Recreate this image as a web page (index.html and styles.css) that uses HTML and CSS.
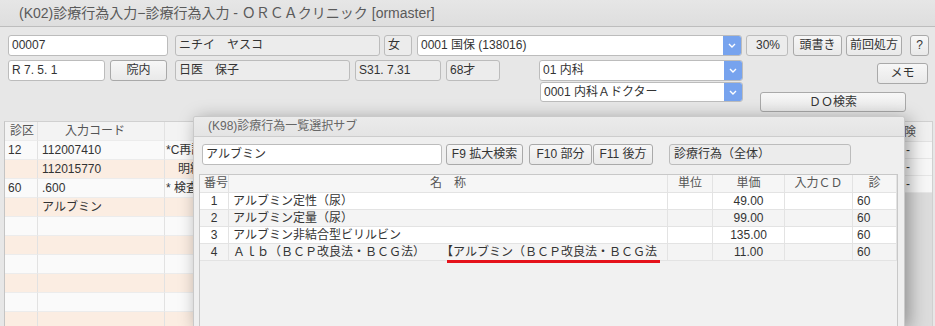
FILE: index.html
```html
<!DOCTYPE html>
<html lang="ja">
<head>
<meta charset="utf-8">
<title>ORCA</title>
<link rel="stylesheet" href="styles.css">
</head>
<body>
<div class="win">
  <div class="titlebar">(K02)診療行為入力−診療行為入力 - ＯＲＣＡクリニック [ormaster]</div>
  <div class="form">
    <div class="row1">
      <div class="fld w-id">00007</div>
      <div class="fld ro w-kana">ニチイ　ヤスコ</div>
      <div class="fld ro w-sex">女</div>
      <div class="combo w-ins"><span class="ctext">0001 国保 (138016)</span><span class="cbtn"><svg width="8" height="5" viewBox="0 0 8 5"><path d="M1 1l3 3 3-3" stroke="#fff" stroke-width="1.4" fill="none"/></svg></span></div>
      <div class="fld ro w-pct">30%</div>
      <div class="btn w-atama">頭書き</div>
      <div class="btn w-zenkai">前回処方</div>
      <div class="btn w-q">?</div>
    </div>
    <div class="row2">
      <div class="fld w-date">R 7. 5. 1</div>
      <div class="btn w-innai">院内</div>
      <div class="fld ro w-name">日医　保子</div>
      <div class="fld ro w-birth">S31. 7.31</div>
      <div class="fld ro w-age">68才</div>
      <div class="combos">
        <div class="combo w-ka"><span class="ctext">01 内科</span><span class="cbtn"><svg width="8" height="5" viewBox="0 0 8 5"><path d="M1 1l3 3 3-3" stroke="#fff" stroke-width="1.4" fill="none"/></svg></span></div>
        <div class="combo w-dr"><span class="ctext">0001 内科Ａドクター</span><span class="cbtn"><svg width="8" height="5" viewBox="0 0 8 5"><path d="M1 1l3 3 3-3" stroke="#fff" stroke-width="1.4" fill="none"/></svg></span></div>
      </div>
      <div class="rightcol">
        <div class="btn w-memo">メモ</div>
        <div class="btn w-do">ＤＯ検索</div>
      </div>
    </div>
  </div>
  <div class="tables">
    <div class="btable">
      <div class="bh c1">診区</div><div class="bh c2">入力コード</div><div class="bh c3"></div>
      <div class="bc c1">12</div><div class="bc c2">112007410</div><div class="bc c3">*C再診</div>
      <div class="bc c1 pe"></div><div class="bc c2 pe">112015770</div><div class="bc c3 pe">　明細書</div>
      <div class="bc c1">60</div><div class="bc c2">.600</div><div class="bc c3">* 検査</div>
      <div class="bc c1 pe"></div><div class="bc c2 pe">アルブミン</div><div class="bc c3 pe"></div>
      <div class="bc c1"></div><div class="bc c2"></div><div class="bc c3"></div>
      <div class="bc c1 pe"></div><div class="bc c2 pe"></div><div class="bc c3 pe"></div>
      <div class="bc c1"></div><div class="bc c2"></div><div class="bc c3"></div>
      <div class="bc c1 pe"></div><div class="bc c2 pe"></div><div class="bc c3 pe"></div>
      <div class="bc c1"></div><div class="bc c2"></div><div class="bc c3"></div>
      <div class="bc c1 pe"></div><div class="bc c2 pe"></div><div class="bc c3 pe"></div>
    </div>
    <div class="rtable">
      <div class="rh">保険</div>
      <div class="rc">-</div>
      <div class="rc">-</div>
      <div class="rc">-</div>
    </div>
  </div>
</div>

<div class="dlg">
  <div class="dtitle">(K98)診療行為一覧選択サブ</div>
  <div class="dbody">
    <div class="srow">
      <div class="fld w-q1">アルブミン</div>
      <div class="btn w-f9">F9 拡大検索</div>
      <div class="btn w-f10">F10 部分</div>
      <div class="btn w-f11">F11 後方</div>
      <div class="fld ro w-kind">診療行為（全体）</div>
    </div>
    <div class="list">
      <div class="lh">番号</div><div class="lh ctr">名　称</div><div class="lh ctr">単位</div><div class="lh ctr">単価</div><div class="lh ctr">入力ＣＤ</div><div class="lh ctr">診</div>

      <div class="lc ctr">1</div><div class="lc">アルブミン定性（尿）</div><div class="lc"></div><div class="lc ctr">49.00</div><div class="lc"></div><div class="lc">60</div>
      <div class="lc ctr alt">2</div><div class="lc alt">アルブミン定量（尿）</div><div class="lc alt"></div><div class="lc ctr alt">99.00</div><div class="lc alt"></div><div class="lc alt">60</div>
      <div class="lc ctr">3</div><div class="lc">アルブミン非結合型ビリルビン</div><div class="lc"></div><div class="lc ctr">135.00</div><div class="lc"></div><div class="lc">60</div>
      <div class="lc ctr alt">4</div><div class="lc alt vis">Ａｌｂ（ＢＣＰ改良法・ＢＣＧ法）　　<span class="mark">【アルブミン（ＢＣＰ改良法・ＢＣＧ法</span></div><div class="lc alt"></div><div class="lc ctr alt">11.00</div><div class="lc alt"></div><div class="lc alt">60</div>
    </div>
  </div>
</div>
</body>
</html>
```

FILE: styles.css
```css
* { box-sizing: border-box; }

html, body {
  margin: 0;
  padding: 0;
}

body {
  width: 935px;
  height: 326px;
  overflow: hidden;
  position: relative;
  background: #e7e7e7;
  font-family: "Liberation Sans", "Noto Sans CJK JP", sans-serif;
  font-size: 12px;
  color: #333;
}

.win {
  width: 935px;
  height: 326px;
  overflow: hidden;
}

.titlebar {
  height: 27px;
  line-height: 26px;
  padding-left: 19px;
  font-size: 14px;
  color: #5a5a5a;
  background: linear-gradient(#e6e6e6, #dedede);
  border-bottom: 1px solid #bdbdbd;
}

.form {
  padding: 8px 0 0 8px;
}

.row1, .row2, .srow {
  display: flex;
  align-items: flex-start;
}

.row2 {
  margin-top: 4px;
  height: 52px;
}

.fld {
  height: 21px;
  line-height: 19px;
  padding: 0 3px;
  border: 1px solid #bcbcbc;
  border-radius: 3px;
  background: #fff;
  white-space: nowrap;
  overflow: hidden;
}

.fld.ro {
  background: #ececec;
}

.btn {
  height: 21px;
  line-height: 19px;
  text-align: center;
  border: 1px solid #a9a9a9;
  border-radius: 3px;
  background: linear-gradient(#f7f7f7, #e9e9e9);
  color: #333;
  white-space: nowrap;
}

.combo {
  display: flex;
  height: 21px;
  border: 1px solid #bcbcbc;
  border-radius: 3px;
  background: #fff;
  overflow: hidden;
}

.ctext {
  flex: 1;
  line-height: 19px;
  padding-left: 3px;
  white-space: nowrap;
}

.cbtn {
  width: 18px;
  display: flex;
  align-items: center;
  justify-content: center;
  background: #77a3ee;
}

/* row 1 widths */
.w-id { width: 160px; }
.w-kana { width: 205px; margin-left: 7px; }
.w-sex { width: 28px; margin-left: 4px; }
.w-ins { width: 325px; margin-left: 5px; }
.w-pct { width: 42px; margin-left: 4px; padding-left: 9px; }
.w-atama { width: 49px; margin-left: 5px; }
.w-zenkai { width: 56px; margin-left: 4px; }
.w-q { width: 19px; margin-left: 8px; }

/* row 2 widths */
.w-date { width: 97px; }
.w-innai { width: 57px; margin-left: 5px; }
.w-name { width: 175px; margin-left: 8px; }
.w-birth { width: 86px; margin-left: 5px; }
.w-age { width: 54px; margin-left: 5px; }

.combos {
  margin-left: 39px;
  width: 204px;
  display: flex;
  flex-direction: column;
  gap: 1px;
}

.w-dr {
  height: 20px;
  margin-left: 1px;
}

.w-dr .ctext { line-height: 18px; }

.rightcol {
  margin-left: 17px;
  width: 168px;
  display: flex;
  flex-direction: column;
}

.w-memo {
  width: 51px;
  margin-top: 3px;
  align-self: flex-end;
}

.w-do {
  width: 146px;
  height: 20px;
  line-height: 18px;
  margin-top: 8px;
}

/* background tables */
.tables {
  margin-top: 9px;
  display: flex;
  padding-left: 4px;
  width: 933px;
}

.btable {
  width: 876px;
  display: grid;
  grid-template-columns: 33px 127px 1fr;
  grid-auto-rows: 19px;
  border-left: 1px solid #c4c4c4;
  border-top: 1px solid #d0d0d0;
}

.bh, .bc {
  line-height: 18px;
  border-right: 1px solid #e2e2e2;
  border-bottom: 1px solid #ececec;
  white-space: nowrap;
  overflow: hidden;
}

.bh {
  background: #f3f3f3;
  color: #555;
}

.bc {
  background: #fafafa;
}

.bc.pe {
  background: #fbede2;
}

.c1 { padding-left: 3px; }
.bh.c1 { padding-left: 5px; }
.c2 { padding-left: 4px; }
.bh.c2 { text-align: center; padding: 0 12px 0 0; }
.c3 { padding-left: 1px; }

.rtable {
  width: 53px;
  height: 205px;
  background: #dcdcdc;
  border-top: 1px solid #d0d0d0;
  border-right: 1px solid #d0d0d0;
}

.rh {
  height: 20px;
  line-height: 20px;
  background: #f0f0f0;
  color: #555;
  text-align: right;
  padding-right: 16px;
  border-bottom: 1px solid #e2e2e2;
}

.rc {
  height: 17px;
  line-height: 16px;
  background: #f7f7f7;
  padding-left: 26px;
  border-bottom: 1px solid #e6e6e6;
}

/* dialog */
.dlg {
  position: absolute;
  left: 193px;
  top: 116px;
  width: 712px;
  height: 210px;
  background: #efefef;
  border: 1px solid #c9c9c9;
  border-bottom: none;
  border-radius: 3px 3px 0 0;
  box-shadow: 4px 3px 18px rgba(0, 0, 0, 0.36);
  overflow: hidden;
}

.dtitle {
  height: 20px;
  line-height: 19px;
  padding-left: 14px;
  color: #666;
  background: linear-gradient(#ebebeb, #e4e4e4);
  border-bottom: 1px solid #cdcdcd;
}

.dbody {
  padding: 7px 0 0 5px;
}

.w-q1 { width: 240px; margin-left: 3px; }
.w-f9 { width: 77px; margin-left: 4px; }
.w-f10 { width: 63px; margin-left: 6px; }
.w-f11 { width: 60px; margin-left: 1px; }
.w-kind { width: 182px; margin-left: 16px; padding-left: 4px; }

.list {
  margin-top: 9px;
  width: 699px;
  height: 160px;
  display: grid;
  grid-template-columns: 29px 439px 45px 72px 68px 44px;
  grid-template-rows: 18px repeat(4, 17px);
  align-content: start;
  background: #f1f1f1;
  border: 1px solid #c8c8c8;
  border-bottom: none;
}

.lh, .lc {
  border-right: 1px solid #e3e3e3;
  border-bottom: 1px solid #e3e3e3;
  white-space: nowrap;
  padding-left: 4px;
}

.lh {
  line-height: 17px;
  background: #f6f6f6;
  color: #555;
}

.lc {
  line-height: 16px;
  background: #fff;
  overflow: hidden;
}

.lc.alt {
  background: #f4f4f4;
}

.lc.vis {
  overflow: visible;
}

.ctr {
  text-align: center;
  padding-left: 0;
}

.mark {
  position: relative;
  margin-left: 4px;
}

.mark::after {
  content: "";
  position: absolute;
  left: 0;
  right: -3px;
  bottom: -4px;
  height: 3px;
  background: #e5121b;
}
```
